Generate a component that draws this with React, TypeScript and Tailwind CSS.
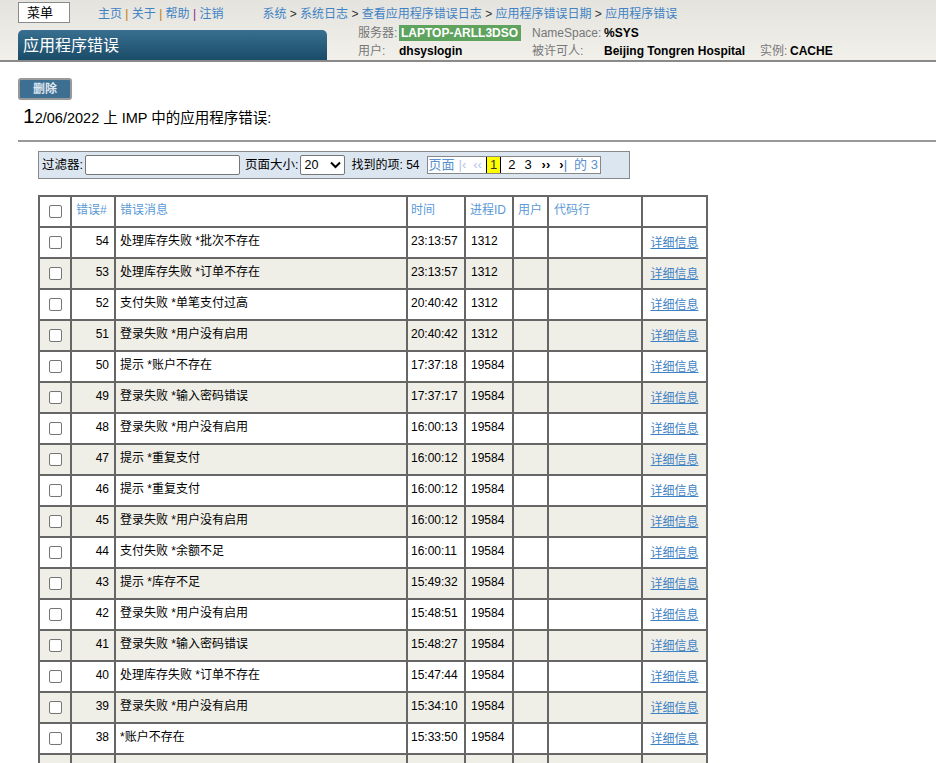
import React from "react";

interface ErrorRow {
    id: number
    msg: string
    time: string
    pid: string
    user?: string
    line?: string
}

const rows: ErrorRow[] = [
    { id: 54, msg: "处理库存失败 *批次不存在", time: "23:13:57", pid: "1312" },
    { id: 53, msg: "处理库存失败 *订单不存在", time: "23:13:57", pid: "1312" },
    { id: 52, msg: "支付失败 *单笔支付过高", time: "20:40:42", pid: "1312" },
    { id: 51, msg: "登录失败 *用户没有启用", time: "20:40:42", pid: "1312" },
    { id: 50, msg: "提示 *账户不存在", time: "17:37:18", pid: "19584" },
    { id: 49, msg: "登录失败 *输入密码错误", time: "17:37:17", pid: "19584" },
    { id: 48, msg: "登录失败 *用户没有启用", time: "16:00:13", pid: "19584" },
    { id: 47, msg: "提示 *重复支付", time: "16:00:12", pid: "19584" },
    { id: 46, msg: "提示 *重复支付", time: "16:00:12", pid: "19584" },
    { id: 45, msg: "登录失败 *用户没有启用", time: "16:00:12", pid: "19584" },
    { id: 44, msg: "支付失败 *余额不足", time: "16:00:11", pid: "19584" },
    { id: 43, msg: "提示 *库存不足", time: "15:49:32", pid: "19584" },
    { id: 42, msg: "登录失败 *用户没有启用", time: "15:48:51", pid: "19584" },
    { id: 41, msg: "登录失败 *输入密码错误", time: "15:48:27", pid: "19584" },
    { id: 40, msg: "处理库存失败 *订单不存在", time: "15:47:44", pid: "19584" },
    { id: 39, msg: "登录失败 *用户没有启用", time: "15:34:10", pid: "19584" },
    { id: 38, msg: "*账户不存在", time: "15:33:50", pid: "19584" },
    { id: 37, msg: "<ZSQLERR>%0AmBk1a+1^%sqlcq.SYS.cls1", time: "15:33:24", pid: "19584", line: "Sneaker+4^" },
];

const Checkbox = () => (
    <span className="inline-block w-[13px] h-[13px] border border-[#767676] rounded-[2px] bg-white align-middle" />
);

// no horizontal padding here, each cell adds its own
const cell = "border-2 border-[#666] pt-[4px] align-top h-[31px] whitespace-nowrap overflow-hidden";

const App: React.FC = () => {

    return (
        <div className="min-h-screen bg-white text-black text-[12px] font-['Liberation_Sans','Noto_Sans_CJK_SC',sans-serif]">

            {/* header */}
            <div className="h-[62px] bg-gradient-to-b from-[#e4e3de] to-[#f1f0eb] border-b-2 border-[#8a8a8a]">

                <div className="flex items-start h-[25px] pl-[18px] pt-[2px]">
                    <div className="w-[52px] h-[21px] border border-[#8a8a8a] bg-white pl-[8px] text-[13px] leading-[19px]">菜单</div>

                    <div className="ml-[28px] mt-[3px] text-[#3f83c4]">
                        主页 <span className="text-[#c17a00]">|</span> 关于 <span className="text-[#c17a00]">|</span> 帮助 <span className="text-[#8a2a8a]">|</span> 注销
                    </div>

                    <div className="ml-[39px] mt-[3px] text-[#3f83c4]">
                        系统 <span className="text-[#333]">&gt;</span> 系统日志 <span className="text-[#333]">&gt;</span> 查看应用程序错误日志 <span className="text-[#333]">&gt;</span> 应用程序错误日期 <span className="text-[#333]">&gt;</span> 应用程序错误
                    </div>
                </div>

                <div className="flex items-start pl-[18px]">
                    <div className="mt-[5px] w-[309px] h-[30px] rounded-t-[5px] bg-gradient-to-b from-[#386f90] to-[#1a4c68] text-white text-[16px] pl-[5px] leading-[31px]">
                        应用程序错误
                    </div>

                    <div className="ml-[31px] grid grid-cols-[41px_133px_72px_156px_30px_auto] grid-rows-[16px_18px] gap-y-[1px] items-center">
                        <span className="text-[#777]">服务器:</span>
                        <span><span className="inline-block bg-[#5ea35e] text-white font-bold px-[2px] leading-[16px] w-[122px]">LAPTOP-ARLL3DSO</span></span>
                        <span className="text-[#777]">NameSpace:</span>
                        <span className="font-bold">%SYS</span>
                        <span />
                        <span />

                        <span className="text-[#777]">用户:</span>
                        <span className="font-bold">dhsyslogin</span>
                        <span className="text-[#777]">被许可人:</span>
                        <span className="font-bold">Beijing Tongren Hospital</span>
                        <span className="text-[#777]">实例:</span>
                        <span className="font-bold">CACHE</span>
                    </div>
                </div>
            </div>

            {/* actions */}
            <div className="pl-[18px] pt-[16px]">
                <button className="w-[54px] h-[22px] rounded-[3px] border-2 border-[#999] bg-[#3d6f93] text-[#dde6ef] font-bold text-[12px] leading-[18px]">删除</button>
            </div>

            <div className="pl-[23px] mt-[5px] h-[22px] flex items-end text-[14.5px]">
                <span className="text-[21px] leading-[22px]">1</span>
                <span className="leading-[18px]">2/06/2022 上 IMP 中的应用程序错误:</span>
            </div>

            <div className="ml-[18px] mt-[13px] border-t-2 border-[#999]" />

            {/* filter bar */}
            <div className="ml-[38px] mt-[9px] w-[592px] h-[28px] bg-[#dce6f0] border border-[#888] flex items-center pl-[3px] text-[12.5px]">
                <span>过滤器:</span>
                <div className="ml-[2px] w-[155px] h-[20px] border border-[#767676] rounded-[2px] bg-white" />
                <span className="ml-[5px]">页面大小:</span>
                <div className="ml-[2px] w-[45px] h-[20px] border border-[#767676] rounded-[2px] bg-white flex items-center justify-between pl-[3px] pr-[3px]">
                    <span>20</span>
                    <svg width="11" height="8" viewBox="0 0 11 8"><path d="M1 1.5 L5.5 6 L10 1.5" fill="none" stroke="#000" strokeWidth="2" /></svg>
                </div>
                <span className="ml-[6px] text-[12px]">找到的项: 54</span>

                <div className="ml-[7px] h-[18px] border border-[#888] bg-white flex items-center pl-[1px] pr-[2px] text-[13px] leading-[16px]">
                    <span className="text-[#5a8fd0]">页面</span>
                    <span className="ml-[4px] text-[#b7c3ea]">|‹</span>
                    <span className="ml-[7px] text-[#b7c3ea]">‹‹</span>
                    <span className="ml-[4px] bg-[#ffff00] border-x border-black px-[3px] text-[#333]">1</span>
                    <span className="ml-[7px]">2</span>
                    <span className="ml-[9px]">3</span>
                    <span className="ml-[10px] font-bold">››</span>
                    <span className="ml-[9px] font-bold">›<span className="text-[#3f83c4] font-normal">|</span></span>
                    <span className="ml-[7px] text-[#5a8fd0]">的 3</span>
                </div>
            </div>

            {/* table */}
            <table className="ml-[38px] mt-[16px] border-collapse border-2 border-[#666] table-fixed w-[668px]">
                <colgroup>
                    <col className="w-[32px]" />
                    <col className="w-[44px]" />
                    <col className="w-[292px]" />
                    <col className="w-[58px]" />
                    <col className="w-[48px]" />
                    <col className="w-[35px]" />
                    <col className="w-[94px]" />
                    <col className="w-[65px]" />
                </colgroup>
                <thead>
                    <tr className="bg-white text-[#5b9ad6]">
                        <th className={cell + " text-center font-normal"}><span className="relative top-[1px]"><Checkbox /></span></th>
                        <th className={cell + " text-left font-normal px-[4px]"}>错误#</th>
                        <th className={cell + " text-left font-normal px-[4px]"}>错误消息</th>
                        <th className={cell + " text-left font-normal px-[3px]"}>时间</th>
                        <th className={cell + " text-left font-normal px-[4px]"}>进程ID</th>
                        <th className={cell + " text-left font-normal px-[4px]"}>用户</th>
                        <th className={cell + " text-left font-normal px-[5px]"}>代码行</th>
                        <th className={cell} />
                    </tr>
                </thead>
                <tbody>
                    {rows.map((r, i) => (
                        <tr key={r.id} className={i % 2 === 0 ? "bg-white" : "bg-[#efeee7]"}>
                            <td className={cell + " text-center"}><span className="relative top-[1px]"><Checkbox /></span></td>
                            <td className={cell + " text-right px-[5px]"}>{r.id}</td>
                            <td className={cell + " px-[4px]"}>{r.msg}</td>
                            <td className={cell + " px-[3px]"}>{r.time}</td>
                            <td className={cell + " px-[5px]"}>{r.pid}</td>
                            <td className={cell + " px-[4px]"}>{r.user}</td>
                            <td className={cell + " px-[14px]"}>{r.line}</td>
                            <td className={cell + " text-center !pt-[6px]"}>
                                <a className="underline text-[#3f83c4]">详细信息</a>
                            </td>
                        </tr>
                    ))}
                </tbody>
            </table>

        </div>
    )

}

export default App;
